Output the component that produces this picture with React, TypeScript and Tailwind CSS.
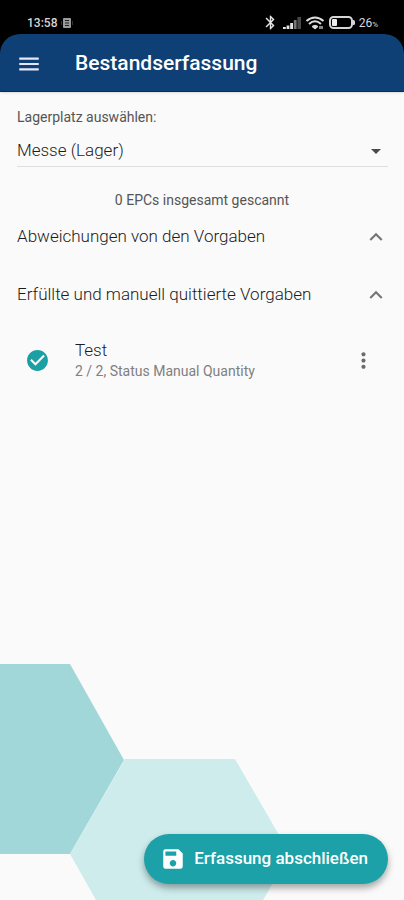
import { useState } from 'react';
import {
  MdArrowDropDown,
  MdBluetooth,
  MdCheckCircle,
  MdExpandLess,
  MdMenu,
  MdMoreVert,
  MdSave,
} from 'react-icons/md';

interface StockItem {
  id: number;
  name: string;
  details: string;
}

interface SectionProps {
  title: string;
  items?: StockItem[];
}

const fulfilledItems: StockItem[] = [
  { id: 1, name: 'Test', details: '2 / 2, Status Manual Quantity' },
];

function StatusBar() {
  return (
    <div className="flex h-[34px] items-end justify-between bg-black pb-[3px] pl-[27px] pr-[26px] text-[#d6d6d6]">
      <div className="flex items-center gap-1">
        <span className="text-[12px] leading-4 font-medium">13:58</span>
        <svg width="12" height="12" viewBox="0 0 12 12" aria-hidden="true">
          <rect x="2" y="1" width="8" height="10" rx="1" fill="#9a9a9a" />
          <path d="M4 3.5h4M4 6h4M4 8.5h4" stroke="#222" strokeWidth="1" />
          <path d="M.5 4v4M11.5 4v4" stroke="#333" />
        </svg>
      </div>
      <div className="flex items-center gap-1">
        <MdBluetooth size={17} className="text-[#e4e4e4]" stroke="currentColor" />
        <svg width="18" height="12" viewBox="0 0 18 12" aria-hidden="true">
          <path d="M0 10h2.8v2H0zM3.6 8.5h2.8v3.5H3.6zM7.2 6H10v6H7.2z" fill="#e4e4e4" />
          <path d="M10.8 3h2.8v9h-2.8z" fill="#777" />
          <path d="M14.4 0H18v12h-3.6z" fill="#484848" />
        </svg>
        <svg width="20" height="14" viewBox="0 0 20 14" fill="none" stroke="#dedede" aria-hidden="true">
          <path d="M1.5 5Q10-2 18.5 5" strokeWidth="2" />
          <path d="M4 8Q10 2.5 16 8" strokeWidth="2" />
          <path d="M7 10.5Q10 8 13 10.5L10 13z" fill="#dedede" strokeWidth="1" />
          <path d="M15 10v3M17 10v3" strokeWidth="1.2" />
        </svg>
        <svg width="26" height="13" viewBox="0 0 26 13" aria-hidden="true">
          <rect x="1" y="1" width="22" height="11" rx="3.5" fill="none" stroke="#d6d6d6" strokeWidth="2" />
          <rect x="3" y="3" width="5" height="7" rx="1" fill="#eee" />
          <path d="M24 4h.5A1.5 1.5 0 0 1 26 5.5v2A1.5 1.5 0 0 1 24.5 9H24z" fill="#d6d6d6" />
        </svg>
        <span className="flex items-baseline text-[12px] leading-4">
          26<span className="text-[8px] leading-none">%</span>
        </span>
      </div>
    </div>
  );
}

function Section({ title, items = [] }: SectionProps) {
  const [open, setOpen] = useState(true);

  return (
    <section>
      <h2>
        <button
          type="button"
          aria-expanded={open}
          onClick={() => setOpen(!open)}
          className="flex h-[58px] w-full items-center justify-between pl-[17px] pr-[15px] text-left text-[17px] font-light text-[#1c1c1c]"
        >
          {title}
          <MdExpandLess size={26} className={open ? 'text-[#757575]' : 'rotate-180 text-[#757575]'} />
        </button>
      </h2>
      {open && items.length > 0 && (
        <ul>
          {items.map((item) => (
            <li key={item.id} className="flex h-[72px] items-center pl-[25px] pr-[28px]">
              <MdCheckCircle size={25} className="shrink-0 text-[#1a9fa5]" />
              <div className="ml-[25px] flex-1">
                <p className="text-[17px] leading-[22px] font-light text-[#1c1c1c]">{item.name}</p>
                <p className="text-[14px] leading-5 text-[#808080]">{item.details}</p>
              </div>
              <button type="button" aria-label="Optionen">
                <MdMoreVert size={25} className="text-[#6b6b6b]" />
              </button>
            </li>
          ))}
        </ul>
      )}
    </section>
  );
}

function App() {
  return (
    <div className="relative flex min-h-screen flex-col overflow-hidden bg-[#fafafa] font-['Roboto',sans-serif]">
      <svg
        className="absolute bottom-0 left-0"
        width="292"
        height="236"
        viewBox="0 0 292 236"
        aria-hidden="true"
      >
        <path d="M0 0H70L124 96L70 190H0z" fill="#a1d7d8" />
        <path d="M125 95H235L290 190L263 236H96L70 190z" fill="#ceecec" />
      </svg>

      <div className="relative bg-black">
        <StatusBar />
        <header className="flex h-[58px] items-center rounded-t-[20px] border-b border-[#08286a] bg-[#0e4076] px-4 pt-[3px] text-white shadow-sm">
          <button type="button" aria-label="Menü">
            <MdMenu size={26} className="text-[#e6e6fa]" />
          </button>
          <h1 className="ml-[33px] text-[21px] font-medium">Bestandserfassung</h1>
        </header>
      </div>

      <main className="relative flex-1">
        <div className="pt-[15px] pr-4 pl-[17px]">
          <label htmlFor="location" className="block text-[14px] leading-5 text-[#555555]">
            Lagerplatz auswählen:
          </label>
          <div className="relative">
            <select
              id="location"
              className="h-10 w-full appearance-none border-b border-[#dedede] bg-transparent pt-2 text-[17px] font-light text-[#1c1c1c]"
            >
              <option>Messe (Lager)</option>
            </select>
            <MdArrowDropDown size={24} className="pointer-events-none absolute top-3 right-0 text-[#4a4a4a]" />
          </div>
        </div>
        <p className="pt-[23px] text-center text-[14px] leading-5 text-[#555555]">
          0 EPCs insgesamt gescannt
        </p>
        <div className="-mt-[2px]">
          <Section title="Abweichungen von den Vorgaben" />
          <Section title="Erfüllte und manuell quittierte Vorgaben" items={fulfilledItems} />
        </div>
      </main>

      <button
        type="button"
        className="absolute right-4 bottom-4 flex h-[50px] items-center gap-2 rounded-full bg-[#1ba1a7] pr-5 pl-4 text-[17px] font-medium text-white shadow-[0_4px_7px_rgba(0,0,0,0.35)]"
      >
        <MdSave size={26} />
        Erfassung abschließen
      </button>
    </div>
  );
}

export default App;
